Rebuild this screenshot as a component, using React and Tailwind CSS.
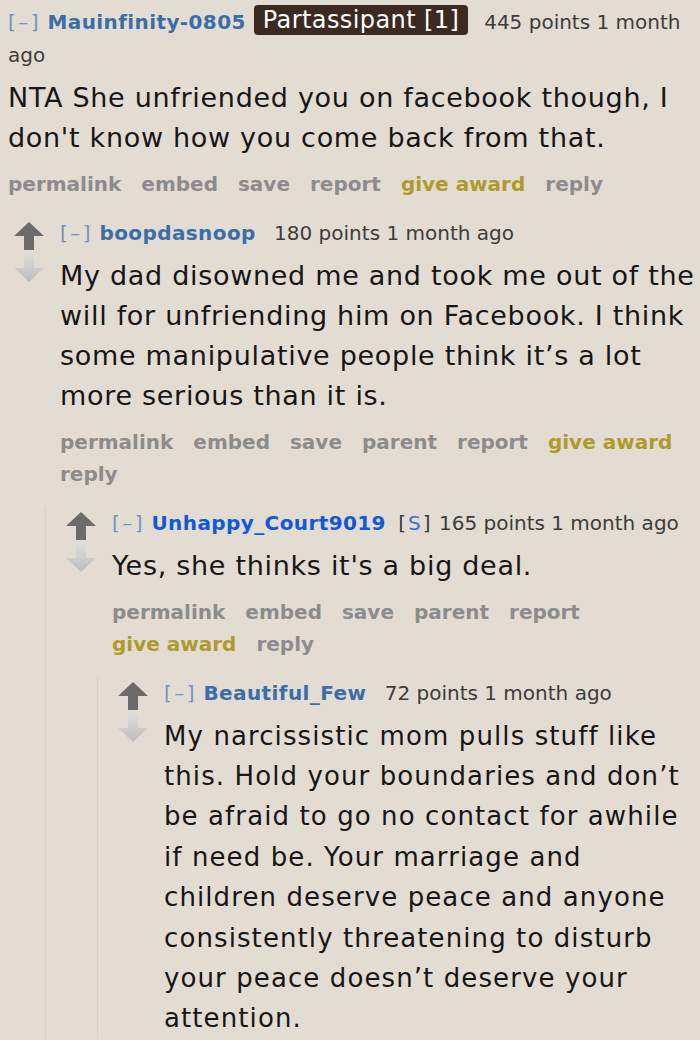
import React from "react";

const sans = { fontFamily: '"DejaVu Sans", Verdana, sans-serif' };

function Arrows() {
  return (
    <div className="flex w-[30px] shrink-0 flex-col items-center pt-[5px]">
      <svg width="30" height="28" viewBox="0 0 30 28">
        <polygon points="15,0 30,14 20,14 20,28 10,28 10,14 0,14" fill="#6b6b6b" />
      </svg>
      <svg width="30" height="28" viewBox="0 0 30 28" className="mt-[4px]">
        <defs>
          <linearGradient id="down" x1="0" y1="0" x2="0" y2="1">
            <stop offset="0" stopColor="#dcdcdc" />
            <stop offset="1" stopColor="#bdbdbd" />
          </linearGradient>
        </defs>
        <polygon points="10,0 20,0 20,14 30,14 15,28 0,14 10,14" fill="url(#down)" />
      </svg>
    </div>
  );
}

function Actions({ items }) {
  if (!items.length) return null;
  return (
    <div className="mt-[10px] text-[20px] font-bold leading-[32.5px]" style={sans}>
      {items.map((a) => (
        <span
          key={a}
          className={(a === "give award" ? "text-[#ae9b2c]" : "text-[#8c8c8c]") + " mr-[20px] inline-block"}
        >
          {a}
        </span>
      ))}
    </div>
  );
}

function Comment({ arrows, header, body, bodyClass, actions, children }) {
  return (
    <div className="flex gap-[16px]">
      {arrows && <Arrows />}
      <div className="min-w-0 flex-1">
        <div className="text-[20px] leading-[33px] text-[#3c3c3c]" style={sans}>
          {header}
        </div>
        <div className={bodyClass} style={sans}>
          {body}
        </div>
        <Actions items={actions} />
        {children && (
          <div className="ml-[-15px] mt-[16px] border-l border-[#d6d0d4] pl-[20px]">{children}</div>
        )}
      </div>
    </div>
  );
}

const bodyA = "mt-[6px] text-[27px] leading-[40px] tracking-[0.7px] text-[#161616]";
const toggle = "tracking-[2.5px] text-[#6f95c2]";
const user = "font-bold tracking-[0.4px] text-[#3b6ea7]";

export default function App() {
  return (
    <div className="min-h-[1040px] w-[700px] overflow-hidden bg-[#e3dcd2] pl-[8px] pt-[5px]">
      <Comment
        header={
          <>
            <span className={toggle}>[–]</span> <span className={user}>Mauinfinity-0805</span>
            <span className="ml-[8px] mr-[16px] inline-block rounded-[4px] bg-[#3b2a22] px-[9px] align-[1px] text-[24px] leading-[30px] tracking-[0.4px] text-white">
              Partassipant [1]
            </span>
            445 points 1 month ago
          </>
        }
        body="NTA She unfriended you on facebook though, I don't know how you come back from that."
        bodyClass={bodyA}
        actions={["permalink", "embed", "save", "report", "give award", "reply"]}
      >
        <Comment
          arrows
          header={
            <>
              <span className={toggle}>[–]</span> <span className={user + " mr-[12px]"}>boopdasnoop</span> 180 points 1 month ago
            </>
          }
          body="My dad disowned me and took me out of the will for unfriending him on Facebook. I think some manipulative people think it’s a lot more serious than it is."
          bodyClass={bodyA}
          actions={["permalink", "embed", "save", "parent", "report", "give award", "reply"]}
        >
          <Comment
            arrows
            header={
              <>
                <span className={toggle}>[–]</span>{" "}
                <span className="mr-[6px] font-bold tracking-[0.4px] text-[#1259d6]">Unhappy_Court9019</span>{" "}
                <span className="tracking-[2px]">
                  [<span className="text-[#3f6fcf]">S</span>]
                </span>{" "}
                165 points 1 month ago
              </>
            }
            body="Yes, she thinks it's a big deal."
            bodyClass={bodyA}
            actions={["permalink", "embed", "save", "parent", "report", "give award", "reply"]}
          >
            <Comment
              arrows
              header={
                <>
                  <span className={toggle}>[–]</span> <span className={user + " mr-[12px]"}>Beautiful_Few</span> 72 points 1 month ago
                </>
              }
              body="My narcissistic mom pulls stuff like this. Hold your boundaries and don’t be afraid to go no contact for awhile if need be. Your marriage and children deserve peace and anyone consistently threatening to disturb your peace doesn’t deserve your attention."
              bodyClass="mt-[6px] text-[26px] leading-[40.4px] tracking-[1.1px] text-[#161616]"
              actions={[]}
            />
          </Comment>
        </Comment>
      </Comment>
    </div>
  );
}
